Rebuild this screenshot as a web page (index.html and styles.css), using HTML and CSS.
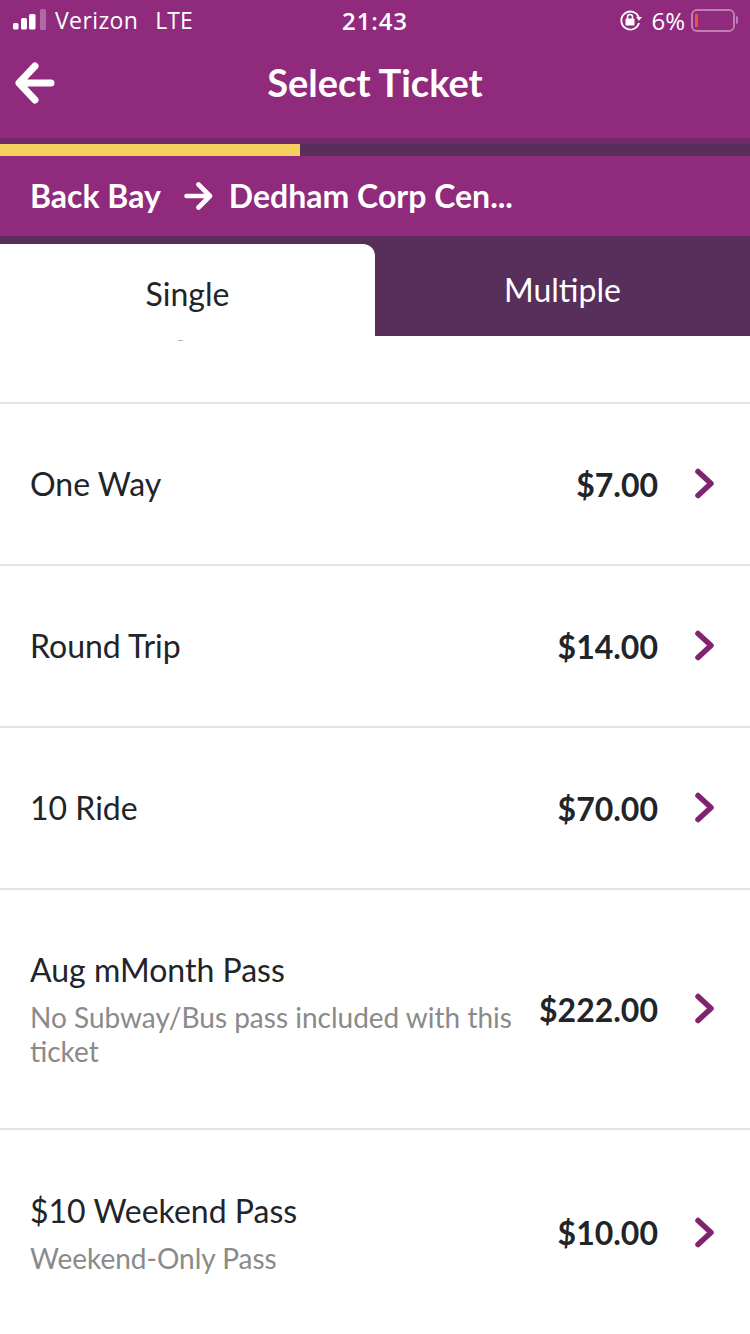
FILE: index.html
```html
<!DOCTYPE html>
<html lang="en">
<head>
<meta charset="utf-8">
<title>Select Ticket</title>
<link rel="stylesheet" href="styles.css">
</head>
<body>
<div class="app">
  <header class="head">
    <div class="status">
      <div class="status-left">
        <svg class="signal" width="34" height="21" viewBox="0 0 34 21"><rect x="0" y="14" width="5.500" height="6.500" rx="1.500" fill="#fff"/><rect x="8" y="9" width="6" height="11.500" rx="1.500" fill="#fff"/><rect x="16" y="5" width="6.500" height="15.500" rx="1.500" fill="#fff"/><rect x="27" y="0" width="6" height="21" rx="1.500" fill="#fff" opacity=".3"/></svg>
        <span class="carrier">Verizon</span>
        <span class="net">LTE</span>
      </div>
      <div class="clock">21:43</div>
      <div class="status-right">
        <svg width="24" height="24" viewBox="0 0 24 24"><path d="M19.800 9.500A9 9 0 1 0 20 15" fill="none" stroke="#fff" stroke-width="1.800"/><path d="M17 9h6l-3 3.800z" fill="#fff"/><rect x="6.500" y="10.500" width="9" height="7" rx="1" fill="#fff"/><path d="M8.500 11V9a2.500 2.500 0 0 1 5 0v2" fill="none" stroke="#fff" stroke-width="1.500"/></svg>
        <span class="pct">6%</span>
        <div class="battery"><div class="battery-body"><div class="battery-level"></div></div><div class="battery-tip"></div></div>
      </div>
    </div>
    <div class="nav">
      <svg class="back" width="40" height="42" viewBox="0 0 40 42"><path d="M20 4L4 21l16 17M5 21h31" fill="none" stroke="#fff" stroke-width="7" stroke-linecap="round" stroke-linejoin="round"/></svg>
      <h1 class="title">Select Ticket</h1>
    </div>
    <div class="band"></div>
    <div class="progress"><div class="progress-fill"></div></div>
    <div class="route">
      <span>Back Bay</span>
      <svg class="route-arrow" width="30" height="30" viewBox="0 0 30 30"><path d="M15.500 3.500l11.500 11.500-11.500 11.500M3.500 15h22" fill="none" stroke="#fff" stroke-width="4.600" stroke-linecap="round" stroke-linejoin="round"/></svg>
      <span>Dedham Corp Cen...</span>
    </div>
  </header>
  <div class="tabs">
    <div class="tab tab-on">Single</div>
    <div class="tab tab-off">Multiple</div>
  </div>
  <main class="list">
    <div class="lead"></div>
    <div class="row"><div class="info"><div class="name">One Way</div></div><div class="price">$7.00</div><svg class="chev" width="22" height="34" viewBox="0 0 22 34"><path d="M5 4.500L18 16.500 5 28.500" fill="none" stroke="#82236f" stroke-width="5.500" stroke-linecap="round" stroke-linejoin="round"/></svg></div>
    <div class="row"><div class="info"><div class="name">Round Trip</div></div><div class="price">$14.00</div><svg class="chev" width="22" height="34" viewBox="0 0 22 34"><path d="M5 4.500L18 16.500 5 28.500" fill="none" stroke="#82236f" stroke-width="5.500" stroke-linecap="round" stroke-linejoin="round"/></svg></div>
    <div class="row"><div class="info"><div class="name">10 Ride</div></div><div class="price">$70.00</div><svg class="chev" width="22" height="34" viewBox="0 0 22 34"><path d="M5 4.500L18 16.500 5 28.500" fill="none" stroke="#82236f" stroke-width="5.500" stroke-linecap="round" stroke-linejoin="round"/></svg></div>
    <div class="row row-tall"><div class="info"><div class="name">Aug mMonth Pass</div><div class="sub">No Subway/Bus pass included with this ticket</div></div><div class="price">$222.00</div><svg class="chev" width="22" height="34" viewBox="0 0 22 34"><path d="M5 4.500L18 16.500 5 28.500" fill="none" stroke="#82236f" stroke-width="5.500" stroke-linecap="round" stroke-linejoin="round"/></svg></div>
    <div class="row row-last"><div class="info"><div class="name">$10 Weekend Pass</div><div class="sub">Weekend-Only Pass</div></div><div class="price">$10.00</div><svg class="chev" width="22" height="34" viewBox="0 0 22 34"><path d="M5 4.500L18 16.500 5 28.500" fill="none" stroke="#82236f" stroke-width="5.500" stroke-linecap="round" stroke-linejoin="round"/></svg></div>
  </main>
</div>
</body>
</html>
```
FILE: styles.css
```css
* { box-sizing: border-box; }
html, body { margin: 0; padding: 0; }
body { width: 750px; height: 1334px; overflow: hidden; background: #fff; font-family: Lato, "Open Sans", sans-serif; color: #212428; }
.app { width: 750px; height: 1334px; display: flex; flex-direction: column; }
.head { background: #8f2a7c; color: #fff; }
.status { height: 40px; display: flex; align-items: center; position: relative; padding: 0 12px 0 13px; font-family: "Open Sans", sans-serif; font-size: 23px; justify-content: space-between; }
.status-left { display: flex; align-items: center; gap: 8px; }
.signal { margin-top: -2px; }
.carrier { margin-right: 9px; letter-spacing: .4px; }
.clock { position: absolute; left: 0; right: 0; text-align: center; font-size: 24px; font-weight: 600; letter-spacing: .9px; }
.status-right { display: flex; align-items: center; gap: 8px; }
.pct { margin-right: -2px; font-size: 24px; }
.battery { display: flex; align-items: center; gap: 1px; }
.battery-body { width: 44px; height: 23px; border: 2px solid #bd7fb3; border-radius: 6px; padding: 3px 2px; }
.battery-level { width: 3px; height: 100%; background: #ed4f3e; }
.battery-tip { width: 2px; height: 8px; background: #bd7fb3; border-radius: 0 2px 2px 0; }
.nav { height: 98px; display: flex; align-items: center; justify-content: center; position: relative; padding-bottom: 14px; }
.back { position: absolute; left: 15px; top: 22px; }
.title { margin: 0; font-size: 38px; font-weight: 700; }
.band { height: 6px; background: #73296c; }
.progress { height: 12px; background: #582e5b; }
.progress-fill { width: 300px; height: 100%; background: #f7d160; }
.route { height: 80px; display: flex; align-items: center; gap: 22px; padding: 0 30px 1px; font-size: 32px; font-weight: 700; }
.route-arrow { margin-right: -6px; }
.tabs { height: 100px; display: flex; background: #582e5b; flex: none; }
.tab { width: 375px; display: flex; justify-content: center; font-size: 32px; }
.tab-on { margin-top: 8px; background: #fff; border-top-right-radius: 12px; padding-top: 30px; color: #212428; position: relative; }
.tab-on::after { content: ""; position: absolute; left: 178px; bottom: -5px; width: 5px; height: 1px; background: #b5b5b5; }
.tab-off { color: #fff; padding-top: 34px; }
.list { flex: 1; }
.lead { height: 69px; margin-top: -1px; border-bottom: 2px solid #e3e3e3; }
.row { height: 162px; display: flex; align-items: center; padding: 0 35px 0 30px; border-bottom: 2px solid #e3e3e3; }
.row-tall { height: 240px; }
.row-last { height: 205px; border-bottom: 0; }
.info { width: 490px; flex: none; }
.name { font-size: 32px; line-height: 40px; }
.sub { font-size: 28px; line-height: 34px; color: #8a8a8a; margin-top: 10px; }
.price { flex: 1; text-align: right; font-size: 32px; font-weight: 700; }
.chev { margin-left: 35px; flex: none; }
```
